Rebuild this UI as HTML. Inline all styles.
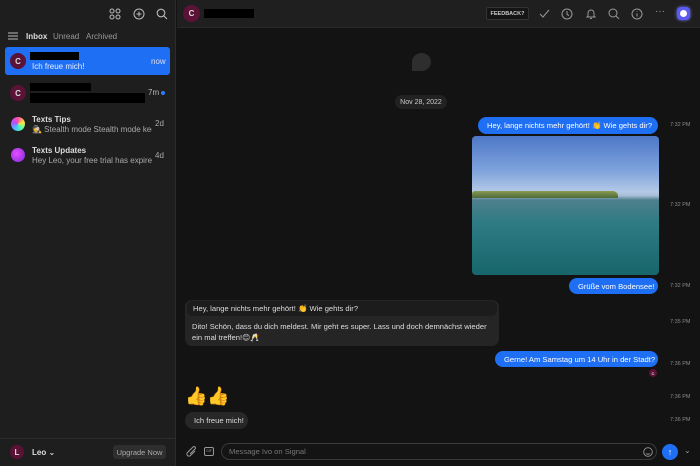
<!DOCTYPE html>
<html><head><meta charset="utf-8"><style>
*{box-sizing:border-box;margin:0;padding:0}
body{width:700px;height:466px;overflow:hidden;background:#131313;font-family:"Liberation Sans","DejaVu Sans",sans-serif;color:#ddd;position:relative}
.abs{position:absolute}
.side{left:0;top:0;width:176px;height:466px;background:#1e1e1e;border-right:1px solid #2c2c2c}
.av{border-radius:50%;background:#5a1236;color:#ddd;font-size:8px;display:flex;align-items:center;justify-content:center;font-weight:bold}
.red{background:#000}
.t{font-size:8px;white-space:nowrap}
.mh{left:177px;top:0;width:523px;height:28px;background:#1f1f1f;border-bottom:1px solid #2a2a2a}
.bub{border-radius:9px;background:#1f6ff5;color:#fff;font-size:7.6px;padding:0 9px;display:flex;align-items:center;white-space:nowrap}
.gb{background:#272727;color:#ddd}
.tm{font-size:5.5px;color:#888;left:670px}
svg{position:absolute}
</style></head><body>
<div class="abs side">
 <svg style="left:109px;top:8px" width="12" height="12" viewBox="0 0 12 12" fill="none" stroke="#bbb" stroke-width="1"><circle cx="3" cy="3" r="2"/><circle cx="9" cy="3" r="2"/><circle cx="3" cy="9" r="2"/><circle cx="9" cy="9" r="2"/></svg>
 <svg style="left:133px;top:8px" width="12" height="12" viewBox="0 0 12 12" fill="none" stroke="#bbb" stroke-width="1"><circle cx="6" cy="6" r="5"/><path d="M6 3.5v5M3.5 6h5"/></svg>
 <svg style="left:156px;top:8px" width="12" height="12" viewBox="0 0 12 12" fill="none" stroke="#bbb" stroke-width="1.1"><circle cx="5" cy="5" r="3.8"/><path d="M8 8l3 3"/></svg>
 <svg style="left:8px;top:32px" width="10" height="8" viewBox="0 0 10 8" stroke="#bbb" stroke-width="1"><path d="M0 1h10M0 4h10M0 7h10"/></svg>
 <div class="abs t" style="left:26px;top:32px;color:#ddd;font-weight:bold">Inbox</div>
 <div class="abs t" style="left:53px;top:32px;color:#999">Unread</div>
 <div class="abs t" style="left:86px;top:32px;color:#999">Archived</div>
 <div class="abs" style="left:5px;top:47px;width:165px;height:28px;background:#1f6ff5;border-radius:3px"></div>
 <div class="abs av" style="left:10px;top:53px;width:16px;height:16px">C</div>
 <div class="abs red" style="left:30px;top:52px;width:49px;height:8px"></div>
 <div class="abs t" style="left:32px;top:62px;color:#e8eeff">Ich freue mich!</div>
 <div class="abs t" style="left:151px;top:57px;color:#dde">now</div>
 <div class="abs av" style="left:10px;top:85px;width:16px;height:16px">C</div>
 <div class="abs red" style="left:30px;top:83px;width:61px;height:8px"></div>
 <div class="abs red" style="left:30px;top:93px;width:115px;height:10px"></div>
 <div class="abs t" style="left:148px;top:88px;color:#bbb">7m</div>
 <div class="abs" style="left:161px;top:91px;width:4px;height:4px;border-radius:50%;background:#2d7cff"></div>
 <div class="abs" style="left:11px;top:117px;width:14px;height:14px;border-radius:50%;background:conic-gradient(#ff4fa3,#ffe33d,#4dffb0,#4db8ff,#b64dff,#ff4fa3)"></div>
 <div class="abs t" style="left:32px;top:115px;font-weight:bold;color:#ddd">Texts Tips</div>
 <div class="abs t" style="left:32px;top:125px;color:#aaa;width:120px;overflow:hidden">🕵 Stealth mode Stealth mode keeps</div>
 <div class="abs t" style="left:155px;top:119px;color:#aaa">2d</div>
 <div class="abs" style="left:11px;top:148px;width:14px;height:14px;border-radius:50%;background:radial-gradient(circle at 40% 40%,#e74cff,#7a2bd9)"></div>
 <div class="abs t" style="left:32px;top:146px;font-weight:bold;color:#ddd">Texts Updates</div>
 <div class="abs t" style="left:32px;top:156px;color:#aaa;width:120px;overflow:hidden">Hey Leo, your free trial has expired. Y</div>
 <div class="abs t" style="left:155px;top:151px;color:#aaa">4d</div>
 <div class="abs" style="left:0;top:438px;width:176px;height:1px;background:#2c2c2c"></div>
 <div class="abs av" style="left:10px;top:445px;width:14px;height:14px">L</div>
 <div class="abs t" style="left:32px;top:448px;font-weight:bold;color:#ddd">Leo ⌄</div>
 <div class="abs t" style="left:113px;top:445px;width:53px;height:14px;background:#2e2e2e;border-radius:3px;color:#aaa;display:flex;align-items:center;justify-content:center;font-size:7.5px">Upgrade Now</div>
</div>
<div class="abs mh"></div>
<div class="abs av" style="left:183px;top:5px;width:17px;height:17px">C</div>
<div class="abs red" style="left:204px;top:9px;width:50px;height:9px"></div>
<div class="abs t" style="left:486px;top:7px;width:43px;height:13px;border:1px solid #333;background:#151515;border-radius:2px;color:#ccc;font-size:5.5px;display:flex;align-items:center;justify-content:center;font-weight:bold">FEEDBACK?</div>
<svg style="left:539px;top:9px" width="11" height="10" viewBox="0 0 11 10" fill="none" stroke="#999" stroke-width="1"><path d="M1 5l3 3 6-7"/></svg>
<svg style="left:561px;top:8px" width="12" height="12" viewBox="0 0 12 12" fill="none" stroke="#999" stroke-width="1"><circle cx="6" cy="6" r="5"/><path d="M6 3v3.5l2 1"/></svg>
<svg style="left:585px;top:8px" width="12" height="12" viewBox="0 0 12 12" fill="none" stroke="#999" stroke-width="1"><path d="M3 8V5a3 3 0 016 0v3l1 1H2zM5 10.5h2"/></svg>
<svg style="left:608px;top:8px" width="12" height="12" viewBox="0 0 12 12" fill="none" stroke="#999" stroke-width="1"><circle cx="5" cy="5" r="4"/><path d="M8 8l3 3"/></svg>
<svg style="left:631px;top:8px" width="12" height="12" viewBox="0 0 12 12" fill="none" stroke="#999" stroke-width="1"><circle cx="6" cy="6" r="5"/><path d="M6 5.5v3M6 3.5v.5"/></svg>
<div class="abs t" style="left:655px;top:6px;color:#999;font-size:10px">···</div>
<div class="abs" style="left:677px;top:7px;width:13px;height:13px;border-radius:4px;background:#5b5bf0;box-shadow:0 0 3px #7a7aff"><div style="margin:3px;width:7px;height:7px;border-radius:50%;background:#fff"></div></div>
<div class="abs" style="left:412px;top:53px;width:19px;height:18px;border-radius:50% 50% 50% 0;background:#2e2e2e"></div>
<div class="abs t" style="left:395px;top:95px;width:52px;height:14px;border-radius:7px;background:#222;color:#ccc;display:flex;align-items:center;justify-content:center;font-size:7px">Nov 28, 2022</div>
<div class="abs bub" style="left:478px;top:117px;width:180px;height:17px">Hey, lange nichts mehr gehört! 👏 Wie gehts dir?</div>
<div class="abs t tm" style="top:122px">7:32 PM</div>
<div class="abs" style="left:472px;top:136px;width:187px;height:139px;border-radius:4px;overflow:hidden;background:linear-gradient(#4d78c8 0%,#7fa3dc 25%,#b4c9e6 40%,#a7bdd6 43%,#4f7f8c 46%,#2f7c84 62%,#17666b 100%)">
 <div style="position:absolute;left:0;top:55px;width:146px;height:7px;background:linear-gradient(#8a9a50,#4d6a3a);border-radius:3px 5px 0 0"></div>
</div>
<div class="abs t tm" style="top:202px">7:32 PM</div>
<div class="abs bub" style="left:569px;top:278px;width:89px;height:16px">Grüße vom Bodensee!</div>
<div class="abs t tm" style="top:283px">7:32 PM</div>
<div class="abs" style="left:185px;top:300px;width:314px;height:46px;border-radius:7px;background:#252525"></div>
<div class="abs" style="left:187px;top:301px;width:310px;height:15px;border-radius:5px;background:#1c1c1c"></div>
<div class="abs t" style="left:193px;top:304px;font-size:7.6px;color:#ddd">Hey, lange nichts mehr gehört! 👏 Wie gehts dir?</div>
<div class="abs t" style="left:192px;top:321px;font-size:7.6px;color:#ddd;line-height:11px">Dito! Schön, dass du dich meldest. Mir geht es super. Lass und doch demnächst wieder<br>ein mal treffen!😊🥂</div>
<div class="abs t tm" style="top:319px">7:35 PM</div>
<div class="abs bub" style="left:495px;top:351px;width:163px;height:16px">Gerne! Am Samstag um 14 Uhr in der Stadt?</div>
<div class="abs t tm" style="top:361px">7:36 PM</div>
<div class="abs av" style="left:649px;top:369px;width:8px;height:8px;font-size:4px">C</div>
<div class="abs" style="left:185px;top:386px;font-size:18px">👍👍</div>
<div class="abs t tm" style="top:394px">7:36 PM</div>
<div class="abs bub gb" style="left:185px;top:412px;width:63px;height:17px">Ich freue mich!</div>
<div class="abs t tm" style="top:417px">7:36 PM</div>
<svg style="left:186px;top:446px" width="11" height="12" viewBox="0 0 11 12" fill="none" stroke="#999" stroke-width="1"><path d="M9 5L4.5 9.5a2 2 0 01-3-3L7 1a1.3 1.3 0 012 2L4 8"/></svg>
<div class="abs" style="left:204px;top:447px;width:10px;height:9px;border:1px solid #999;border-radius:2px;font-size:3.5px;color:#999;text-align:center;line-height:7px">GIF</div>
<div class="abs" style="left:221px;top:443px;width:436px;height:17px;border:1px solid #3a3a3a;border-radius:9px;background:#141414"></div>
<div class="abs t" style="left:229px;top:447px;color:#777;font-size:7.6px">Message Ivo on Signal</div>
<svg style="left:643px;top:447px" width="10" height="10" viewBox="0 0 10 10" fill="none" stroke="#999" stroke-width=".9"><circle cx="5" cy="5" r="4.3"/><path d="M3 6.5q2 1.5 4 0"/></svg>
<div class="abs" style="left:662px;top:444px;width:16px;height:16px;border-radius:50%;background:#1f6ff5;color:#fff;font-size:9px;text-align:center;line-height:16px">↑</div>
<div class="abs t" style="left:684px;top:446px;color:#999;font-size:8px">⌄</div>
</body></html>
